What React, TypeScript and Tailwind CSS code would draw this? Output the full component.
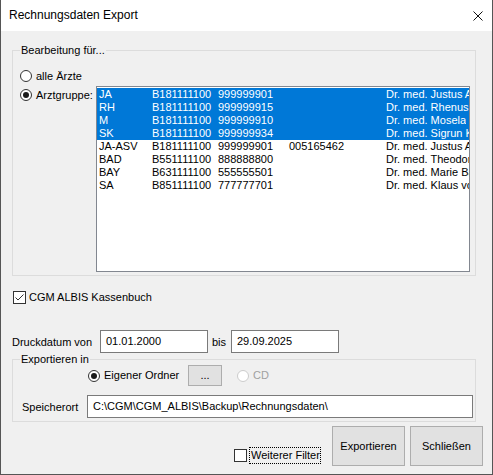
import React from "react";

type Row = { code: string; bsnr: string; lanr: string; extra: string; name: string; selected?: boolean };

const rows: Row[] = [
  { code: "JA", bsnr: "B181111100", lanr: "999999901", extra: "", name: "Dr. med. Justus Albis", selected: true },
  { code: "RH", bsnr: "B181111100", lanr: "999999915", extra: "", name: "Dr. med. Rhenus Meier", selected: true },
  { code: "M", bsnr: "B181111100", lanr: "999999910", extra: "", name: "Dr. med. Mosela", selected: true },
  { code: "SK", bsnr: "B181111100", lanr: "999999934", extra: "", name: "Dr. med. Sigrun Kraft", selected: true },
  { code: "JA-ASV", bsnr: "B181111100", lanr: "999999901", extra: "005165462", name: "Dr. med. Justus Albis" },
  { code: "BAD", bsnr: "B551111100", lanr: "888888800", extra: "", name: "Dr. med. Theodor Bad" },
  { code: "BAY", bsnr: "B631111100", lanr: "555555501", extra: "", name: "Dr. med. Marie Bayer" },
  { code: "SA", bsnr: "B851111100", lanr: "777777701", extra: "", name: "Dr. med. Klaus von Saar" },
];

function Radio({ checked, disabled }: { checked?: boolean; disabled?: boolean }) {
  return (
    <span
      className={
        disabled
          ? "flex h-[12px] w-[12px] shrink-0 items-center justify-center rounded-full border border-[#cccccc] bg-white"
          : "flex h-[12px] w-[12px] shrink-0 items-center justify-center rounded-full border border-[#333333] bg-white"
      }
    >
      {checked && <span className="h-[6px] w-[6px] rounded-full bg-[#1a1a1a]" />}
    </span>
  );
}

function Checkbox({ checked }: { checked?: boolean }) {
  return (
    <span className="flex h-[13px] w-[13px] shrink-0 items-center justify-center border border-[#333333] bg-white">
      {checked && (
        <svg width="11" height="11" viewBox="0 0 11 11">
          <polyline points="1.5,5.5 4,8 9.5,2.5" fill="none" stroke="#333333" strokeWidth="1" />
        </svg>
      )}
    </span>
  );
}

function TextBox({ value, width }: { value: string; width: string }) {
  return (
    <div className={`flex h-[23px] items-center whitespace-nowrap border border-[#7a7a7a] bg-white pl-[5px] ${width}`}>
      {value}
    </div>
  );
}

export default function App() {
  return (
    <div className="flex h-[475px] w-[493px] flex-col border-x border-b border-[#555555] bg-[#f0f0f0] font-['Liberation_Sans',Arial,sans-serif] text-[11px] leading-[13px] text-black">
      {/* title bar */}
      <div className="flex h-[31px] shrink-0 items-center justify-between bg-white pl-[8px] pr-[9px]">
        <span className="text-[12px]">Rechnungsdaten Export</span>
        <svg width="10" height="10" viewBox="0 0 10 10">
          <path d="M0.5 0.5 L9.5 9.5 M9.5 0.5 L0.5 9.5" stroke="#111111" strokeWidth="1" />
        </svg>
      </div>

      <div className="flex flex-col pl-[11px]">
        {/* Bearbeitung für */}
        <fieldset className="mt-[13px] w-[464px] border border-[#dcdcdc]">
          <legend className="ml-[7px] px-[1px] leading-[12px]">Bearbeitung für...</legend>
          <div className="pb-[3px] pl-[7px] pt-[14px]">
            <div className="flex h-[12px] items-center gap-[4px]">
              <Radio />
              <span>alle Ärzte</span>
            </div>
            <div className="mt-[4px] flex">
              <div className="mt-[3px] flex h-[12px] w-[76px] shrink-0 items-center gap-[4px]">
                <Radio checked />
                <span>Arztgruppe:</span>
              </div>
              <div className="h-[186px] w-[374px] overflow-hidden border border-[#828790] bg-white pt-[1px]">
                {rows.map((r, i) => (
                  <div
                    key={i}
                    className={
                      r.selected
                        ? "flex h-[13px] whitespace-nowrap bg-[#0078d7] pl-[2px] text-white"
                        : "flex h-[13px] whitespace-nowrap pl-[2px]"
                    }
                  >
                    <span className="w-[53px] shrink-0">{r.code}</span>
                    <span className="w-[66px] shrink-0">{r.bsnr}</span>
                    <span className="w-[71px] shrink-0">{r.lanr}</span>
                    <span className="w-[97px] shrink-0">{r.extra}</span>
                    <span className="overflow-hidden">{r.name}</span>
                  </div>
                ))}
              </div>
            </div>
          </div>
        </fieldset>

        {/* Kassenbuch */}
        <div className="ml-[1px] mt-[15px] flex h-[13px] items-center gap-[3px]">
          <Checkbox checked />
          <span>CGM ALBIS Kassenbuch</span>
        </div>

        {/* Druckdatum */}
        <div className="mt-[26px] flex h-[23px] items-center">
          <span className="w-[88px] pt-[2px]">Druckdatum von</span>
          <TextBox value="01.01.2000" width="w-[108px]" />
          <span className="w-[23px] pl-[4px] pt-[2px]">bis</span>
          <TextBox value="29.09.2025" width="w-[108px]" />
        </div>

        {/* Exportieren in */}
        <fieldset className="w-[464px] border border-[#dcdcdc]">
          <legend className="ml-[7px] px-[1px] leading-[12px]">Exportieren in</legend>
          <div className="pb-[3px]">
            <div className="flex h-[21px] items-center pl-[75px]">
              <Radio checked />
              <span className="ml-[4px] w-[84px] whitespace-nowrap">Eigener Ordner</span>
              <div className="flex h-[21px] w-[34px] items-center justify-center border border-[#adadad] bg-[#e1e1e1]">
                ...
              </div>
              <span className="ml-[15px]">
                <Radio disabled />
              </span>
              <span className="ml-[4px] text-[#a0a0a0]">CD</span>
            </div>
            <div className="mt-[9px] flex h-[23px] items-center pl-[9px]">
              <span className="w-[65px] pt-[2px]">Speicherort</span>
              <TextBox value="C:\CGM\CGM_ALBIS\Backup\Rechnungsdaten\" width="w-[386px]" />
            </div>
          </div>
        </fieldset>

        {/* bottom */}
        <div className="mt-[4px] flex items-start justify-end pr-[9px]">
          <div className="mr-[11px] mt-[21px] flex h-[17px] items-center gap-[2px]">
            <Checkbox />
            <span className="flex h-[17px] w-[72px] items-center whitespace-nowrap border border-dotted border-black pl-[1px]">
              Weiterer Filter
            </span>
          </div>
          <div className="flex h-[40px] w-[73px] items-center justify-center border border-[#adadad] bg-[#e1e1e1]">
            Exportieren
          </div>
          <div className="ml-[5px] flex h-[40px] w-[73px] items-center justify-center border border-[#adadad] bg-[#e1e1e1]">
            Schließen
          </div>
        </div>
      </div>
    </div>
  );
}
